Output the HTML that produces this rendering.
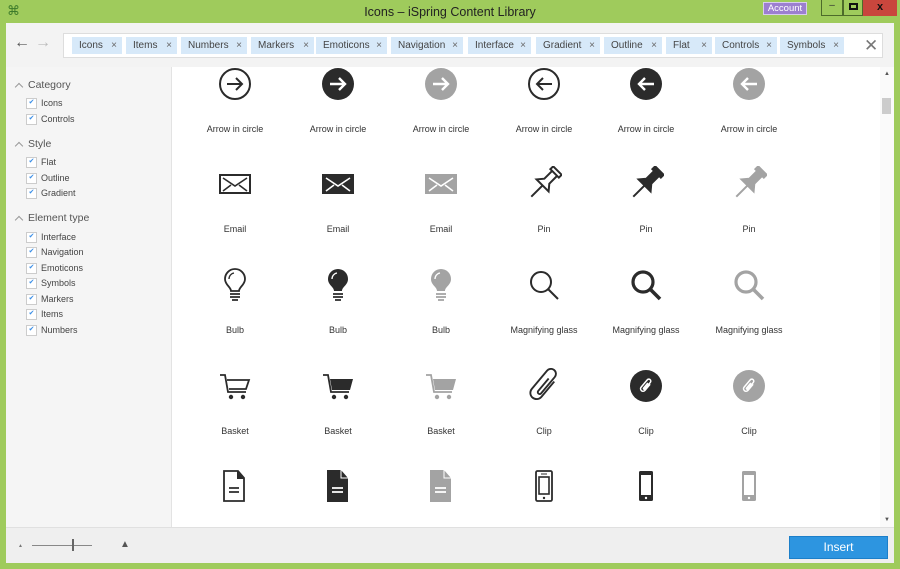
<!DOCTYPE html>
<html><head><meta charset="utf-8"><style>
*{margin:0;padding:0;box-sizing:border-box}
body{width:900px;height:569px;overflow:hidden;background:#9fcb5c;font-family:"Liberation Sans",sans-serif;position:relative;color:#333}
.abs{position:absolute}
#title{left:0;top:0;width:900px;height:23px;text-align:center;font-size:12.5px;line-height:24px;color:#222}
#win{left:6px;top:23px;width:888px;height:540px;background:#fff}
#bar{left:0;top:0;width:888px;height:44px;background:#f3f3f3}
#search{left:57px;top:10px;width:820px;height:25px;background:#fff;border:1px solid #ddd}
.tag{position:absolute;top:3px;height:17px;background:#d7e9f9;font-size:10px;line-height:17px;padding-left:7px;color:#444}
.tag b{position:absolute;right:5px;font-weight:normal;color:#666;font-size:10px}
#side{left:0;top:44px;width:166px;height:461px;background:#f5f5f5;border-right:1px solid #e3e3e3}
.h{position:absolute;left:22px;font-size:10.5px;color:#555}
.h:before{content:"";position:absolute;left:-12px;top:5px;width:5px;height:5px;border-left:1px solid #999;border-top:1px solid #999;transform:rotate(45deg)}
.ck{position:absolute;left:20px;font-size:9px;color:#444}
.ck:before{content:"✔";position:absolute;left:0;top:0;width:9px;height:9px;border:1px solid #ccc;background:#fff;color:#3a8ee6;font-size:7px;line-height:8px;text-align:center}
.ck span{position:absolute;left:15px;top:0;white-space:nowrap;line-height:10px}
.c{position:absolute;width:100px;text-align:center;font-size:9px;color:#333;line-height:11px}
.c svg{display:block;margin:0 auto 22px}
</style></head><body>
<div class="abs" style="left:7px;top:3px;color:#3c7a2a;font-size:13px">⌘</div>
<div id="title" class="abs">Icons – iSpring Content Library</div>
<div class="abs" style="left:763px;top:2px;width:44px;height:13px;background:#9c7fd0;border:1px solid #d8ccef;color:#fff;font-size:9.5px;line-height:12px;text-align:center">Account</div>
<div class="abs" style="left:821px;top:0;width:22px;height:16px;border:1px solid #4d6b2a;border-top:none;font-size:10px;text-align:center;line-height:12px">–</div>
<div class="abs" style="left:843px;top:0;width:20px;height:16px;border:1px solid #4d6b2a;border-top:none"><div class="abs" style="left:5px;top:3px;width:9px;height:7px;border:2px solid #111"></div></div>
<div class="abs" style="left:863px;top:0;width:34px;height:16px;background:#c9463d;text-align:center;font-size:11px;font-weight:bold;line-height:15px;color:#111">x</div>
<div id="win" class="abs">
<div id="bar" class="abs">
<div class="abs" style="left:8px;top:11px;font-size:16px;color:#555">←</div>
<div class="abs" style="left:29px;top:11px;font-size:16px;color:#bbb">→</div>
<div id="search" class="abs">
<div class="tag" style="left:8px;width:50px">Icons<b>×</b></div>
<div class="tag" style="left:62px;width:51px">Items<b>×</b></div>
<div class="tag" style="left:117px;width:66px">Numbers<b>×</b></div>
<div class="tag" style="left:187px;width:63px">Markers<b>×</b></div>
<div class="tag" style="left:252px;width:71px">Emoticons<b>×</b></div>
<div class="tag" style="left:327px;width:72px">Navigation<b>×</b></div>
<div class="tag" style="left:404px;width:63px">Interface<b>×</b></div>
<div class="tag" style="left:472px;width:64px">Gradient<b>×</b></div>
<div class="tag" style="left:540px;width:58px">Outline<b>×</b></div>
<div class="tag" style="left:602px;width:46px">Flat<b>×</b></div>
<div class="tag" style="left:651px;width:62px">Controls<b>×</b></div>
<div class="tag" style="left:716px;width:64px">Symbols<b>×</b></div>
<div class="abs" style="left:800px;top:2px;font-size:17px;color:#777">✕</div>
</div></div>
<div id="side" class="abs">
<div class="h" style="top:12px">Category</div>
<div class="ck" style="top:31px"><span>Icons</span></div>
<div class="ck" style="top:47px"><span>Controls</span></div>
<div class="h" style="top:71px">Style</div>
<div class="ck" style="top:90px"><span>Flat</span></div>
<div class="ck" style="top:106px"><span>Outline</span></div>
<div class="ck" style="top:121px"><span>Gradient</span></div>
<div class="h" style="top:145px">Element type</div>
<div class="ck" style="top:165px"><span>Interface</span></div>
<div class="ck" style="top:180px"><span>Navigation</span></div>
<div class="ck" style="top:196px"><span>Emoticons</span></div>
<div class="ck" style="top:211px"><span>Symbols</span></div>
<div class="ck" style="top:227px"><span>Markers</span></div>
<div class="ck" style="top:242px"><span>Items</span></div>
<div class="ck" style="top:258px"><span>Numbers</span></div>
</div>
<div class="abs" style="left:874px;top:44px;width:14px;height:461px;background:#fafafa">
<div class="abs" style="left:4px;top:4px;font-size:6px;color:#555">▲</div>
<div class="abs" style="left:2px;top:31px;width:9px;height:16px;background:#ccc"></div>
<div class="abs" style="left:4px;top:450px;font-size:6px;color:#555">▼</div></div>
</div>

<!-- Row 1 -->
<div class="c" style="left:185px;top:66px"><svg width="36" height="36"><circle cx="18" cy="18" r="15" fill="none" stroke="#2b2b2b" stroke-width="2"/><path d="M10 18h15M19 12l6 6-6 6" fill="none" stroke="#2b2b2b" stroke-width="2"/></svg>Arrow in circle</div>
<div class="c" style="left:288px;top:66px"><svg width="36" height="36"><circle cx="18" cy="18" r="16" fill="#2b2b2b"/><path d="M10 18h15M19 12l6 6-6 6" fill="none" stroke="#fff" stroke-width="2.4"/></svg>Arrow in circle</div>
<div class="c" style="left:391px;top:66px"><svg width="36" height="36"><circle cx="18" cy="18" r="16" fill="#a3a3a3"/><path d="M10 18h15M19 12l6 6-6 6" fill="none" stroke="#fff" stroke-width="2.4"/></svg>Arrow in circle</div>
<div class="c" style="left:494px;top:66px"><svg width="36" height="36"><circle cx="18" cy="18" r="15" fill="none" stroke="#2b2b2b" stroke-width="2"/><path d="M26 18H11M17 12l-6 6 6 6" fill="none" stroke="#2b2b2b" stroke-width="2"/></svg>Arrow in circle</div>
<div class="c" style="left:596px;top:66px"><svg width="36" height="36"><circle cx="18" cy="18" r="16" fill="#2b2b2b"/><path d="M26 18H11M17 12l-6 6 6 6" fill="none" stroke="#fff" stroke-width="2.4"/></svg>Arrow in circle</div>
<div class="c" style="left:699px;top:66px"><svg width="36" height="36"><circle cx="18" cy="18" r="16" fill="#a3a3a3"/><path d="M26 18H11M17 12l-6 6 6 6" fill="none" stroke="#fff" stroke-width="2.4"/></svg>Arrow in circle</div>
<!-- Row 2 -->
<div class="c" style="left:185px;top:166px"><svg width="36" height="36"><rect x="3" y="9" width="30" height="18" fill="none" stroke="#2b2b2b" stroke-width="2"/><path d="M6 12l12 8 12-8M6 25l8-6M30 25l-8-6" fill="none" stroke="#2b2b2b" stroke-width="1.6"/></svg>Email</div>
<div class="c" style="left:288px;top:166px"><svg width="36" height="36"><rect x="2" y="8" width="32" height="20" fill="#2b2b2b"/><path d="M6 12l12 8 12-8M6 25l8-6M30 25l-8-6" fill="none" stroke="#fff" stroke-width="1.6"/></svg>Email</div>
<div class="c" style="left:391px;top:166px"><svg width="36" height="36"><rect x="2" y="8" width="32" height="20" fill="#a3a3a3"/><path d="M6 12l12 8 12-8M6 25l8-6M30 25l-8-6" fill="none" stroke="#fff" stroke-width="1.6"/></svg>Email</div>
<div class="c" style="left:494px;top:166px"><svg width="36" height="36"><g transform="rotate(45 18 18)" fill="none" stroke="#2b2b2b" stroke-width="2"><rect x="12" y="-1" width="12" height="4"/><path d="M14.5 3v11l-5 6h17l-5-6V3M18 20v16"/></g></svg>Pin</div>
<div class="c" style="left:596px;top:166px"><svg width="36" height="36"><g transform="rotate(45 18 18)" fill="#2b2b2b" stroke="#2b2b2b" stroke-width="2"><rect x="12" y="-1" width="12" height="4"/><path d="M14.5 3v11l-5 6h17l-5-6V3M18 20v16"/></g></svg>Pin</div>
<div class="c" style="left:699px;top:166px"><svg width="36" height="36"><g transform="rotate(45 18 18)" fill="#a3a3a3" stroke="#a3a3a3" stroke-width="2"><rect x="12" y="-1" width="12" height="4"/><path d="M14.5 3v11l-5 6h17l-5-6V3M18 20v16"/></g></svg>Pin</div>
<!-- Row 3 -->
<div class="c" style="left:185px;top:267px"><svg width="36" height="36"><path d="M14 24c0-4-6-6-6-12a10 10 0 0 1 20 0c0 6-6 8-6 12z" fill="none" stroke="#2b2b2b" stroke-width="1.8"/><path d="M13 27h10M13 30h10M15 33h6" stroke="#2b2b2b" stroke-width="1.8"/><path d="M12 12a6 6 0 0 1 5-6" fill="none" stroke="#2b2b2b" stroke-width="1.3"/></svg>Bulb</div>
<div class="c" style="left:288px;top:267px"><svg width="36" height="36"><path d="M14 24c0-4-6-6-6-12a10 10 0 0 1 20 0c0 6-6 8-6 12z" fill="#2b2b2b"/><path d="M13 27h10M13 30h10M15 33h6" stroke="#2b2b2b" stroke-width="1.8"/><path d="M12 12a6 6 0 0 1 5-6" fill="none" stroke="#fff" stroke-width="1.3"/></svg>Bulb</div>
<div class="c" style="left:391px;top:267px"><svg width="36" height="36"><path d="M14 24c0-4-6-6-6-12a10 10 0 0 1 20 0c0 6-6 8-6 12z" fill="#a3a3a3"/><path d="M13 27h10M13 30h10M15 33h6" stroke="#a3a3a3" stroke-width="1.8"/><path d="M12 12a6 6 0 0 1 5-6" fill="none" stroke="#fff" stroke-width="1.3"/></svg>Bulb</div>
<div class="c" style="left:494px;top:267px"><svg width="36" height="36"><circle cx="15" cy="15" r="10" fill="none" stroke="#2b2b2b" stroke-width="2"/><path d="M22 22l10 10" stroke="#2b2b2b" stroke-width="2"/></svg>Magnifying glass</div>
<div class="c" style="left:596px;top:267px"><svg width="36" height="36"><circle cx="15" cy="15" r="10" fill="none" stroke="#2b2b2b" stroke-width="3.2"/><path d="M22 22l10 10" stroke="#2b2b2b" stroke-width="3.6"/></svg>Magnifying glass</div>
<div class="c" style="left:699px;top:267px"><svg width="36" height="36"><circle cx="15" cy="15" r="10" fill="none" stroke="#a3a3a3" stroke-width="3.2"/><path d="M22 22l10 10" stroke="#a3a3a3" stroke-width="3.6"/></svg>Magnifying glass</div>
<!-- Row 4 -->
<div class="c" style="left:185px;top:368px"><svg width="36" height="36"><path d="M3 7h5l3 17h18M10 12h22l-3 9H12" fill="none" stroke="#2b2b2b" stroke-width="1.8"/><circle cx="14" cy="29" r="2.2" fill="#2b2b2b"/><circle cx="26" cy="29" r="2.2" fill="#2b2b2b"/></svg>Basket</div>
<div class="c" style="left:288px;top:368px"><svg width="36" height="36"><path d="M3 7h5l3 17h18" fill="none" stroke="#2b2b2b" stroke-width="1.8"/><path d="M10 11h23l-3 11H12z" fill="#2b2b2b"/><circle cx="14" cy="29" r="2.2" fill="#2b2b2b"/><circle cx="26" cy="29" r="2.2" fill="#2b2b2b"/></svg>Basket</div>
<div class="c" style="left:391px;top:368px"><svg width="36" height="36"><path d="M3 7h5l3 17h18" fill="none" stroke="#a3a3a3" stroke-width="1.8"/><path d="M10 11h23l-3 11H12z" fill="#a3a3a3"/><circle cx="14" cy="29" r="2.2" fill="#a3a3a3"/><circle cx="26" cy="29" r="2.2" fill="#a3a3a3"/></svg>Basket</div>
<div class="c" style="left:494px;top:368px"><svg width="36" height="36"><g transform="rotate(40 18 18) translate(18 18) scale(1.25) translate(-18 -18)"><path d="M22 10v16a5 5 0 0 1-10 0V7a4 4 0 0 1 8 0v17a1.5 1.5 0 0 1-3 0V11" fill="none" stroke="#2b2b2b" stroke-width="1.5"/></g></svg>Clip</div>
<div class="c" style="left:596px;top:368px"><svg width="36" height="36"><circle cx="18" cy="18" r="16" fill="#2b2b2b"/><g transform="translate(9 9) scale(.5) rotate(40 18 18)"><path d="M22 10v16a5 5 0 0 1-10 0V7a4 4 0 0 1 8 0v17a1.5 1.5 0 0 1-3 0V11" fill="none" stroke="#fff" stroke-width="3"/></g></svg>Clip</div>
<div class="c" style="left:699px;top:368px"><svg width="36" height="36"><circle cx="18" cy="18" r="16" fill="#a3a3a3"/><g transform="translate(9 9) scale(.5) rotate(40 18 18)"><path d="M22 10v16a5 5 0 0 1-10 0V7a4 4 0 0 1 8 0v17a1.5 1.5 0 0 1-3 0V11" fill="none" stroke="#fff" stroke-width="3"/></g></svg>Clip</div>
<!-- Row 5 -->
<div class="c" style="left:185px;top:468px"><svg width="36" height="36"><path d="M7 3h14l6 7v23H7z" fill="none" stroke="#2b2b2b" stroke-width="1.8"/><path d="M20 3v8h7" fill="#2b2b2b"/><path d="M12 20h10M12 24h10" stroke="#2b2b2b" stroke-width="1.8"/></svg>Text document</div>
<div class="c" style="left:288px;top:468px"><svg width="36" height="36"><path d="M7 2h14l7 8v24H7z" fill="#2b2b2b"/><path d="M21 2v8h7" fill="none" stroke="#fff" stroke-width="1"/><path d="M12 20h11M12 24h11" stroke="#fff" stroke-width="1.8"/></svg>Text document</div>
<div class="c" style="left:391px;top:468px"><svg width="36" height="36"><path d="M7 2h14l7 8v24H7z" fill="#a3a3a3"/><path d="M21 2v8h7" fill="none" stroke="#fff" stroke-width="1"/><path d="M12 20h11M12 24h11" stroke="#fff" stroke-width="1.8"/></svg>Text document</div>
<div class="c" style="left:494px;top:468px"><svg width="36" height="36"><rect x="10" y="3" width="16" height="30" rx="1.5" fill="none" stroke="#2b2b2b" stroke-width="1.8"/><rect x="13" y="9" width="10" height="17" fill="none" stroke="#2b2b2b" stroke-width="1.6"/><path d="M15 6h6" stroke="#2b2b2b"/><circle cx="18" cy="30" r="1.2" fill="#2b2b2b"/></svg>Mobile phone</div>
<div class="c" style="left:596px;top:468px"><svg width="36" height="36"><rect x="11" y="3" width="14" height="30" rx="1.5" fill="#2b2b2b"/><rect x="13" y="7" width="10" height="20" fill="#fff"/><circle cx="18" cy="30" r="1.2" fill="#fff"/></svg>Mobile phone</div>
<div class="c" style="left:699px;top:468px"><svg width="36" height="36"><rect x="11" y="3" width="14" height="30" rx="1.5" fill="#a3a3a3"/><rect x="13" y="7" width="10" height="20" fill="#fff"/><circle cx="18" cy="30" r="1.2" fill="#fff"/></svg>Mobile phone</div>
<div class="abs" style="left:6px;top:527px;width:888px;height:36px;background:#efefef;border-top:1px solid #e0e0e0">
<div class="abs" style="left:12px;top:15px;font-size:5px;color:#777">▲</div>
<div class="abs" style="left:26px;top:17px;width:60px;height:1px;background:#888"></div>
<div class="abs" style="left:66px;top:11px;width:2px;height:12px;background:#666"></div>
<div class="abs" style="left:114px;top:11px;font-size:10px;color:#555">▲</div>
<div class="abs" style="left:783px;top:8px;width:99px;height:23px;background:#2d95e0;border:1px solid #1c7fc9;color:#fff;font-size:12px;text-align:center;line-height:21px">Insert</div>
</div>
</body></html>
